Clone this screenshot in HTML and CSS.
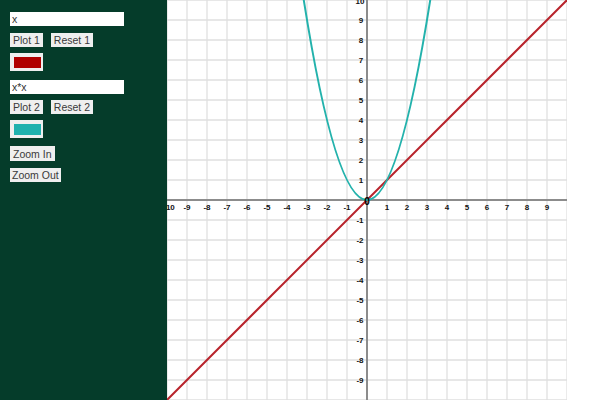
FILE: index.html
```html
<!DOCTYPE html>
<html>
<head>
<meta charset="utf-8">
<link rel="stylesheet" href="styles.css">
</head>
<body>
<div class="page">
  <div class="panel">
    <input class="fn" type="text" value="x">
    <div class="row r1">
      <button class="btn">Plot 1</button>
      <button class="btn">Reset 1</button>
    </div>
    <div class="swatch s1"><div class="fill red"></div></div>
    <input class="fn f2" type="text" value="x*x">
    <div class="row r2">
      <button class="btn">Plot 2</button>
      <button class="btn">Reset 2</button>
    </div>
    <div class="swatch s2"><div class="fill teal"></div></div>
    <button class="btn zin">Zoom In</button>
    <button class="btn zout">Zoom Out</button>
  </div>
  <svg class="graph" width="400" height="400" viewBox="0 0 400 400">
    <path class="grid" d="M0 0V400M20 0V400M40 0V400M60 0V400M80 0V400M100 0V400M120 0V400M140 0V400M160 0V400M180 0V400M220 0V400M240 0V400M260 0V400M280 0V400M300 0V400M320 0V400M340 0V400M360 0V400M380 0V400M400 0V400M0 0H400M0 20H400M0 40H400M0 60H400M0 80H400M0 100H400M0 120H400M0 140H400M0 160H400M0 180H400M0 220H400M0 240H400M0 260H400M0 280H400M0 300H400M0 320H400M0 340H400M0 360H400M0 380H400M0 400H400"/>
    <path class="axis" d="M200 0V400M0 200H400"/>
    <g class="xl">
      <text x="2" y="210">-10</text><text x="20" y="210">-9</text><text x="40" y="210">-8</text><text x="60" y="210">-7</text><text x="80" y="210">-6</text><text x="100" y="210">-5</text><text x="120" y="210">-4</text><text x="140" y="210">-3</text><text x="160" y="210">-2</text><text x="180" y="210">-1</text>
      <text x="220" y="210">1</text><text x="240" y="210">2</text><text x="260" y="210">3</text><text x="280" y="210">4</text><text x="300" y="210">5</text><text x="320" y="210">6</text><text x="340" y="210">7</text><text x="360" y="210">8</text><text x="380" y="210">9</text>
    </g>
    <g class="yl">
      <text x="193" y="4">10</text><text x="194" y="23">9</text><text x="194" y="43">8</text><text x="194" y="63">7</text><text x="194" y="83">6</text><text x="194" y="103">5</text><text x="194" y="123">4</text><text x="194" y="143">3</text><text x="194" y="163">2</text><text x="194" y="183">1</text>
      <text x="193" y="223">-1</text><text x="193" y="243">-2</text><text x="193" y="263">-3</text><text x="193" y="283">-4</text><text x="193" y="303">-5</text><text x="193" y="323">-6</text><text x="193" y="343">-7</text><text x="193" y="363">-8</text><text x="193" y="383">-9</text>
    </g>
    <path class="line" d="M0 400L400 0"/>
    <path class="para" d="M130 -45Q200 445 270 -45"/>
    <text class="origin" x="200" y="205">0</text>
  </svg>
</div>
</body>
</html>
```
FILE: styles.css
```css
html, body {
  margin: 0;
  padding: 0;
  background: #ffffff;
}
.page {
  display: flex;
  width: 600px;
  height: 400px;
  overflow: hidden;
}
.panel {
  width: 147px;
  height: 388px;
  flex: none;
  background: #053c2a;
  padding: 12px 10px 0 10px;
  display: flex;
  flex-direction: column;
  align-items: flex-start;
  font-family: "Liberation Sans", Arial, sans-serif;
}
.fn {
  box-sizing: border-box;
  width: 114px;
  height: 14px;
  border: none;
  margin: 0;
  padding: 0 2px;
  background: #ffffff;
  font-family: "Liberation Sans", Arial, sans-serif;
  font-size: 10.5px;
  color: #333333;
  outline: none;
}
.f2 { margin-top: 9px; }
.row {
  display: flex;
  gap: 8px;
  margin-top: 7px;
}
.r2 { margin-top: 6px; }
.btn {
  box-sizing: border-box;
  height: 14px;
  margin: 0;
  padding: 0 3px;
  border: none;
  background: #efefef;
  font-family: "Liberation Sans", Arial, sans-serif;
  font-size: 10.5px;
  line-height: 14px;
  color: #3a3a3a;
}
.swatch {
  box-sizing: border-box;
  width: 33px;
  height: 18px;
  margin-top: 6px;
  padding: 4px 2px 3px 4px;
  background: #efefef;
}
.fill {
  width: 100%;
  height: 100%;
}
.red { background: #b00000; }
.teal { background: #1fb1ae; }
.zin { margin-top: 8px; height: 15px; }
.zout { margin-top: 7px; padding: 0 2px; }
.graph {
  display: block;
  flex: none;
  overflow: hidden;
}
.grid {
  stroke: #e0e0e0;
  stroke-width: 1.3;
  fill: none;
}
.axis {
  stroke: #8c8c8c;
  stroke-width: 2;
  fill: none;
}
.xl text, .yl text {
  font-family: "Liberation Sans", Arial, sans-serif;
  font-size: 8px;
  font-weight: bold;
  fill: #111111;
  text-anchor: middle;
}
.line {
  stroke: #b8232b;
  stroke-width: 2;
  fill: none;
}
.para {
  stroke: #23b2ac;
  stroke-width: 2;
  fill: none;
}
.origin {
  font-family: "Liberation Sans", Arial, sans-serif;
  font-size: 10px;
  font-weight: bold;
  fill: #000000;
  text-anchor: middle;
}
```
